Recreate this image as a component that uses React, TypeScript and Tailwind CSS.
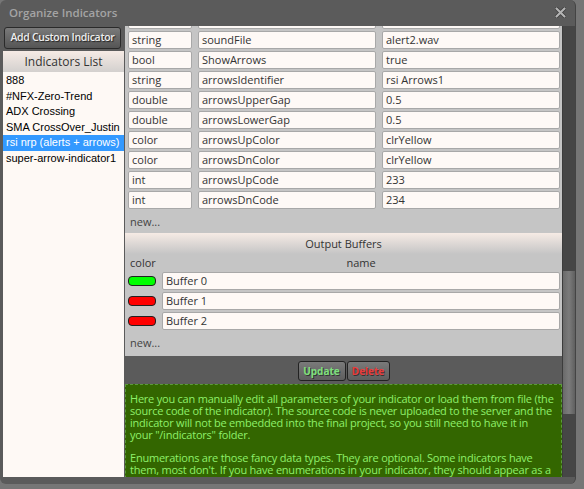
import React from "react";

const params: [string, string, string][] = [
  ["string", "soundFile", "alert2.wav"],
  ["bool", "ShowArrows", "true"],
  ["string", "arrowsIdentifier", "rsi Arrows1"],
  ["double", "arrowsUpperGap", "0.5"],
  ["double", "arrowsLowerGap", "0.5"],
  ["color", "arrowsUpColor", "clrYellow"],
  ["color", "arrowsDnColor", "clrYellow"],
  ["int", "arrowsUpCode", "233"],
  ["int", "arrowsDnCode", "234"],
];

const indicators = [
  "888",
  "#NFX-Zero-Trend",
  "ADX Crossing",
  "SMA CrossOver_Justin",
  "rsi nrp (alerts + arrows)",
  "super-arrow-indicator1",
];

const buffers: [string, string][] = [
  ["#00ff00", "Buffer 0"],
  ["#ff0000", "Buffer 1"],
  ["#ff0000", "Buffer 2"],
];

function Field({ w, text }: { w: string; text?: string }) {
  return (
    <div
      className={`${w} h-[18px] shrink-0 rounded-[2px] border border-[#a8a8a8] bg-[#fef9f6] pl-[3px] text-[11px] leading-[16px] text-[#333] whitespace-nowrap overflow-hidden`}
    >
      {text}
    </div>
  );
}

export default function App() {
  return (
    <div className="w-[584px] h-[489px] bg-[#767676] overflow-hidden font-['Open_Sans',sans-serif]">
      <div className="w-[576px] h-[484px] rounded-[6px] bg-[#5b5b5b] border-r border-[#444] flex flex-col">
        {/* title bar */}
        <div className="h-[26px] shrink-0 flex items-center justify-between pl-[9px] pr-[9px]">
          <span className="text-[11.5px] font-semibold text-[#a4a4a4] leading-none">Organize Indicators</span>
          <svg width="11" height="11" viewBox="0 0 11 11" className="-mt-[2px]">
            <path d="M1.5 1.5 L9.5 9.5 M9.5 1.5 L1.5 9.5" stroke="#3a3a3a" strokeWidth="3.6" strokeLinecap="round" />
            <path d="M1.5 1.5 L9.5 9.5 M9.5 1.5 L1.5 9.5" stroke="#b4b4b4" strokeWidth="2.2" strokeLinecap="round" />
          </svg>
        </div>
        {/* body */}
        <div className="h-[451px] flex pl-[3px]">
          {/* left column */}
          <div className="w-[121px] flex flex-col">
            <div className="h-[25px] flex items-start pt-[1px] pl-[1px]">
              <div className="w-[117px] h-[22px] rounded-[3px] border border-[#2a2a2a] bg-gradient-to-b from-[#7a7a7a] to-[#555] flex items-center justify-center whitespace-nowrap text-[10.5px] tracking-[-0.3px] font-semibold text-[#eeeeee] [text-shadow:1px_1px_1px_#222]">
                Add Custom Indicator
              </div>
            </div>
            <div className="flex-1 bg-[#fef9f5] flex flex-col">
              <div className="h-[21px] bg-gradient-to-b from-[#f6ebe5] to-[#d3d0ce] flex items-center justify-center text-[12px] text-[#333]">
                Indicators List
              </div>
              <div className="flex flex-col font-['Liberation_Sans',Arial,sans-serif] text-[11px] pt-[1px]">
                {indicators.map((n) => (
                  <div
                    key={n}
                    className={`h-[15.6px] leading-[15.6px] pl-[3px] whitespace-nowrap ${
                      n.startsWith("rsi") ? "bg-[#3399ff] text-white" : "text-black"
                    }`}
                  >
                    {n}
                  </div>
                ))}
              </div>
            </div>
          </div>
          {/* middle column */}
          <div className="w-[437px] ml-[1px] overflow-hidden">
            <div className="-mt-[15px] flex flex-col">
              <div className="bg-[#c5c5c5] pl-[3px] pr-[2px] flex flex-col gap-[2px]">
                {[["", "", ""] as [string, string, string], ...params].map((r, i) => (
                  <div key={i} className="flex gap-[6px]">
                    <Field w="w-[64px]" text={r[0]} />
                    <Field w="w-[178px]" text={r[1]} />
                    <Field w="w-[178px]" text={r[2]} />
                  </div>
                ))}
                <div className="h-[22px] flex items-center pl-[2px] text-[11px] text-[#444]">new...</div>
              </div>
              <div className="h-[21px] bg-gradient-to-b from-[#f6ebe5] to-[#c5c5c5] flex items-center justify-center pt-[2px] text-[11px] text-[#333]">
                Output Buffers
              </div>
              <div className="bg-[#c5c5c5] pl-[3px] pr-[2px] flex flex-col">
                <div className="h-[18px] flex items-center text-[11px] text-[#333]">
                  <span className="w-[34px] pl-[2px]">color</span>
                  <span className="flex-1 text-center">name</span>
                </div>
                <div className="flex flex-col gap-[2px]">
                  {buffers.map(([c, n]) => (
                    <div key={n} className="flex items-center gap-[6px]">
                      <div className="w-[28px] h-[10px] rounded-[4px] border border-[#222]" style={{ backgroundColor: c }} />
                      <Field w="w-[398px]" text={n} />
                    </div>
                  ))}
                </div>
                <div className="h-[26px] flex items-center pl-[2px] text-[11px] text-[#444]">new...</div>
              </div>
              <div className="h-[28px] flex justify-center items-start pt-[5px] gap-[1px]">
                <div className="w-[48px] h-[20px] rounded-[3px] border border-[#222] bg-gradient-to-b from-[#7a7a7a] to-[#5e5e5e] flex items-center justify-center text-[10px] font-bold text-[#7ee07e] [text-shadow:1px_1px_0_#333]">
                  Update
                </div>
                <div className="w-[43px] h-[20px] rounded-[3px] border border-[#222] bg-gradient-to-b from-[#7a7a7a] to-[#5e5e5e] flex items-center justify-center text-[10px] font-bold text-[#e83c3c] [text-shadow:1px_1px_0_#333]">
                  Delete
                </div>
              </div>
              <div className="h-[120px] bg-[#336600] border border-dashed border-[#5c9a3c] pl-[4px] pt-[8px] text-[11px] leading-[12px] text-[#8ef06a] tracking-[-0.22px] whitespace-nowrap">
                <div>Here you can manually edit all parameters of your indicator or load them from file (the</div>
                <div>source code of the indicator). The source code is never uploaded to the server and the</div>
                <div>indicator will not be embedded into the final project, so you still need to have it in</div>
                <div>your "/indicators" folder.</div>
                <div className="h-[11px]" />
                <div>Enumerations are those fancy data types. They are optional. Some indicators have</div>
                <div>them, most don't. If you have enumerations in your indicator, they should appear as a</div>
                <div>text when you read the indicator from file. Otherwise you can copy them from the</div>
              </div>
            </div>
          </div>
          {/* scrollbar */}
          <div className="w-[13px] h-[451px] bg-[#464646] border-l border-[#3c3c3c] flex flex-col">
            <div className="h-[245px] shrink-0" />
            <div className="h-[143px] shrink-0 bg-gradient-to-r from-[#6a6a6a] via-[#7c7c7c] to-[#5f5f5f]" />
          </div>
        </div>
      </div>
    </div>
  );
}
